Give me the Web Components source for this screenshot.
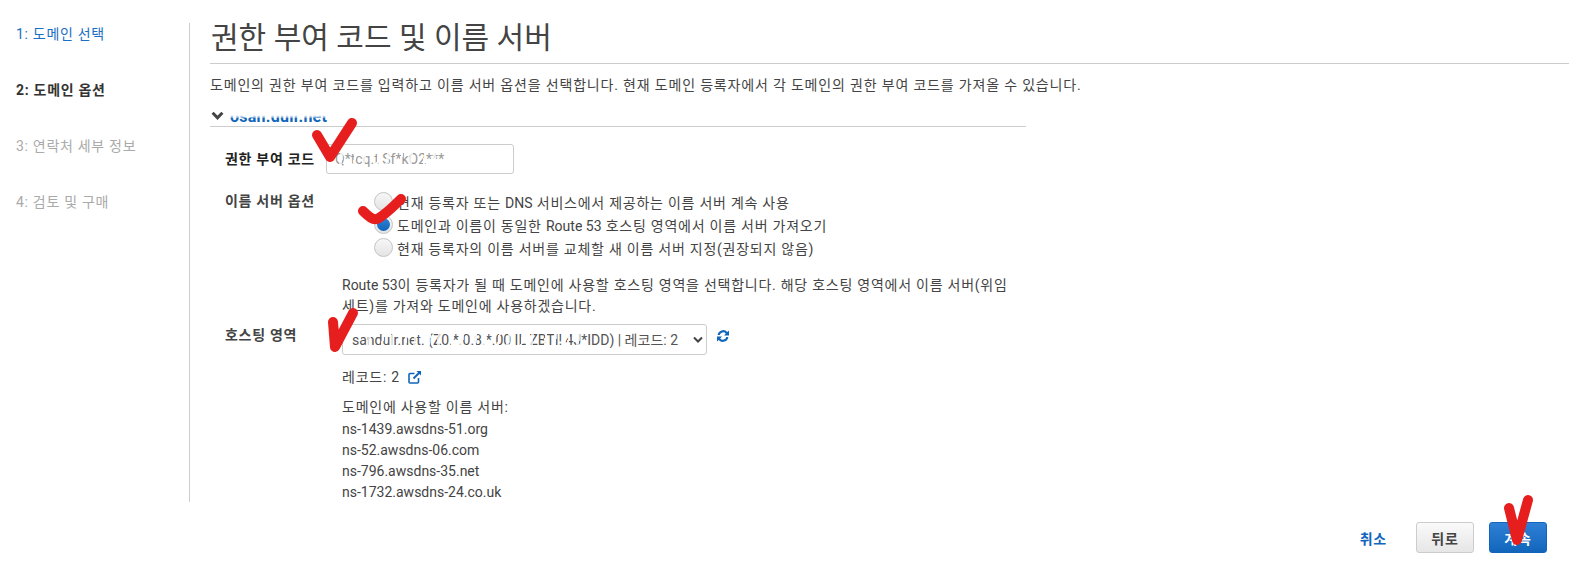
<!DOCTYPE html>
<html lang="ko">
<head>
<meta charset="utf-8">
<title>권한 부여 코드 및 이름 서버</title>
<style>
    html, body { margin: 0; height: 568px; overflow: hidden; background: #fff; }
    body {
        font-family: Roboto, "Noto Sans CJK KR", sans-serif;
        font-size: 14px;
        color: #444;
        letter-spacing: .75px;
    }
    /* hangul runs get the extra tracking, latin ones do not */
    .en { letter-spacing: 0; }
</style>
</head>
<body>
<domain-wizard>
    <wizard-nav slot="nav">
        <wizard-step state="done">1: 도메인 선택</wizard-step>
        <wizard-step state="current">2: 도메인 옵션</wizard-step>
        <wizard-step>3: 연락처 세부 정보</wizard-step>
        <wizard-step>4: 검토 및 구매</wizard-step>
    </wizard-nav>

    <page-heading title="권한 부여 코드 및 이름 서버">도메인의 권한 부여 코드를 입력하고 이름 서버 옵션을 선택합니다. 현재 도메인 등록자에서 각 도메인의 권한 부여 코드를 가져올 수 있습니다.</page-heading>

    <domain-section name="osan.dulr.net">
        <form-row label="권한 부여 코드" strong>
            <text-field value="Q*tcq.t Sf*kO2***"></text-field>
        </form-row>
        <form-row label="이름 서버 옵션" class="ns-row">
            <radio-group>
                <radio-option>현재 등록자 또는 <span class="en">DNS</span> 서비스에서 제공하는 이름 서버 계속 사용</radio-option>
                <radio-option checked>도메인과 이름이 동일한 <span class="en">Route 53</span> 호스팅 영역에서 이름 서버 가져오기</radio-option>
                <radio-option>현재 등록자의 이름 서버를 교체할 새 이름 서버 지정(권장되지 않음)</radio-option>
            </radio-group>
            <field-note><span class="en">Route 53</span>이 등록자가 될 때 도메인에 사용할 호스팅 영역을 선택합니다. 해당 호스팅 영역에서 이름 서버(위임<br>세트)를 가져와 도메인에 사용하겠습니다.</field-note>
        </form-row>
        <form-row label="호스팅 영역" class="zone-row">
            <zone-picker value="sandulr.net. (Z0.*.0.8.*.00 IL ZBTI! 4J*IDD) | 레코드: 2"></zone-picker>
            <record-info>
                <span slot="count">레코드: 2</span>
                도메인에 사용할 이름 서버:
                <div class="en">ns-1439.awsdns-51.org</div>
                <div class="en">ns-52.awsdns-06.com</div>
                <div class="en">ns-796.awsdns-35.net</div>
                <div class="en">ns-1732.awsdns-24.co.uk</div>
            </record-info>
        </form-row>
    </domain-section>

    <wizard-footer slot="footer"></wizard-footer>

    <hand-check slot="marks" style="left:306px;top:111px" d="M11 24 L24 46 L46 12"></hand-check>
    <hand-check slot="marks" style="left:349px;top:185px" d="M14 26 C20 32 24 35 28 34 C36 30 46 20 52 14"></hand-check>
    <hand-check slot="marks" style="left:320px;top:300px" d="M13 22 L15 47 L33 13"></hand-check>
    <hand-check slot="marks" style="left:1496px;top:488px" d="M13 20 L21 52 L32 12"></hand-check>
</domain-wizard>

<script>
const FONT = 'Roboto, "Noto Sans CJK KR", sans-serif';
// white streaks that hide part of the values, as in the edited screenshot
const STREAKS = 'repeating-linear-gradient(98deg, rgba(255,255,255,.9) 0 2px, rgba(255,255,255,0) 2px 9px, rgba(255,255,255,.75) 9px 12px, rgba(255,255,255,0) 12px 23px)';

class DomainWizard extends HTMLElement {
    connectedCallback() {
        this.attachShadow({ mode: 'open' });
        this.shadowRoot.innerHTML = `
            <style>
                :host { display: block; position: relative; width: 1589px; height: 568px; overflow: hidden; }
                .top { display: flex; padding-top: 23px; height: 480px; }
                .side { width: 190px; height: 479px; border-right: 1px solid #ccc; box-sizing: border-box; flex: none; }
                .main { flex: 1; padding: 0 20px; min-width: 0; }
            </style>
            <div class="top">
                <div class="side"><slot name="nav"></slot></div>
                <div class="main"><slot></slot></div>
            </div>
            <slot name="footer"></slot>
            <slot name="marks"></slot>
        `;
    }
}

class WizardNav extends HTMLElement {
    connectedCallback() {
        this.attachShadow({ mode: 'open' });
        this.shadowRoot.innerHTML = `
            <style>
                :host { display: flex; flex-direction: column; gap: 36px; padding: 1px 0 0 16px; }
            </style>
            <slot></slot>
        `;
    }
}

class WizardStep extends HTMLElement {
    connectedCallback() {
        this.attachShadow({ mode: 'open' });
        this.shadowRoot.innerHTML = `
            <style>
                :host { display: block; height: 20px; line-height: 20px; font-size: 14px; color: #aaa; letter-spacing: .7px; }
                :host([state="done"]) { color: #1a6fc4; }
                :host([state="current"]) { color: #333; font-weight: 700; }
            </style>
            <slot></slot>
        `;
    }
}

class PageHeading extends HTMLElement {
    connectedCallback() {
        this.attachShadow({ mode: 'open' });
        this.shadowRoot.innerHTML = `
            <style>
                :host { display: block; }
                h1 {
                    margin: 0; height: 40px; line-height: 30px; font-size: 30px; font-weight: 400;
                    color: #444; border-bottom: 1px solid #ccc; padding-left: 1px; letter-spacing: 0;
                }
                p { margin: 11px 0 0; line-height: 20px; font-size: 14px; color: #444; letter-spacing: .82px; }
            </style>
            <h1>${this.getAttribute('title')}</h1>
            <p><slot></slot></p>
        `;
    }
}

class DomainSection extends HTMLElement {
    connectedCallback() {
        this.attachShadow({ mode: 'open' });
        this.shadowRoot.innerHTML = `
            <style>
                :host { display: block; width: 816px; margin-top: 11px; }
                .head {
                    display: flex; align-items: center; gap: 6px; height: 20px; padding-left: 1px;
                    border-bottom: 1px solid #ccc; font-weight: 700; font-size: 16px; color: #1166bb; letter-spacing: .25px;
                }
                svg { width: 13px; height: 10px; flex: none; }
                .name { position: relative; }
                .name::after {
                    content: ""; position: absolute; left: -1px; right: -1px; top: 0; height: 11px;
                    background: linear-gradient(#fff 75%, rgba(255,255,255,.3));
                }
            </style>
            <div class="head">
                <svg viewBox="0 0 13 10"><path d="M1.6 1.8 L6.5 6.8 L11.4 1.8" fill="none" stroke="#444" stroke-width="3"/></svg>
                <span class="name">${this.getAttribute('name')}</span>
            </div>
            <slot></slot>
        `;
    }
}

class FormRow extends HTMLElement {
    connectedCallback() {
        this.attachShadow({ mode: 'open' });
        this.shadowRoot.innerHTML = `
            <style>
                :host { display: grid; grid-template-columns: 101px 1fr; padding-left: 15px; margin-top: 17px; }
                :host(.ns-row) { margin-top: 16px; }
                :host(.zone-row) { margin-top: 8px; }
                .label { font-weight: 700; color: #444; line-height: 20px; padding-top: 1px; letter-spacing: .7px; white-space: nowrap; }
                :host([strong]) .label { color: #222; padding-top: 5px; }
                .field { min-width: 0; }
            </style>
            <div class="label">${this.getAttribute('label')}</div>
            <div class="field"><slot></slot></div>
        `;
    }
}

class TextField extends HTMLElement {
    connectedCallback() {
        this.attachShadow({ mode: 'open' });
        this.shadowRoot.innerHTML = `
            <style>
                :host { display: block; position: relative; width: 188px; }
                input {
                    display: block; width: 188px; height: 30px; box-sizing: border-box; padding: 0 8px;
                    border: 1px solid #ccc; border-radius: 3px; font: 14px ${FONT}; color: #999; background: #fff;
                }
                .streaks { position: absolute; left: 6px; right: 2px; top: 4px; bottom: 4px; background: ${STREAKS}; }
            </style>
            <input type="text" value="${this.getAttribute('value')}">
            <div class="streaks"></div>
        `;
    }
}

class RadioGroup extends HTMLElement {
    connectedCallback() {
        this.attachShadow({ mode: 'open' });
        this.shadowRoot.innerHTML = `
            <style>
                :host { display: block; padding-left: 48px; }
            </style>
            <slot></slot>
        `;
    }
}

class RadioOption extends HTMLElement {
    connectedCallback() {
        this.attachShadow({ mode: 'open' });
        this.shadowRoot.innerHTML = `
            <style>
                :host { display: flex; align-items: center; gap: 4px; height: 23px; color: #444; white-space: nowrap; }
                .dot {
                    width: 19px; height: 19px; box-sizing: border-box; border-radius: 50%; flex: none;
                    border: 1px solid #c4c4c4; background: linear-gradient(#f7f7f7, #e4e4e4);
                    display: flex; align-items: center; justify-content: center;
                }
                :host([checked]) .dot::after {
                    content: ""; width: 13px; height: 13px; border-radius: 50%;
                    background: linear-gradient(#2f80d6, #1166bb);
                }
            </style>
            <span class="dot"></span>
            <span><slot></slot></span>
        `;
    }
}

class FieldNote extends HTMLElement {
    connectedCallback() {
        this.attachShadow({ mode: 'open' });
        this.shadowRoot.innerHTML = `
            <style>
                :host { display: block; width: 720px; box-sizing: border-box; padding-left: 16px; margin-top: 16px; line-height: 20.5px; color: #444; }
            </style>
            <slot></slot>
        `;
    }
}

class ZonePicker extends HTMLElement {
    connectedCallback() {
        this.attachShadow({ mode: 'open' });
        this.shadowRoot.innerHTML = `
            <style>
                :host { display: flex; align-items: center; gap: 9px; padding-left: 16px; }
                .select { position: relative; width: 365px; height: 31px; }
                select {
                    appearance: none; display: block; width: 100%; height: 100%; box-sizing: border-box;
                    padding: 0 20px 0 9px; border: 1px solid #ccc; border-radius: 3px;
                    font: 14px ${FONT}; color: #555; background: #fff;
                }
                .arrow { position: absolute; right: 4px; top: 12px; width: 10px; height: 8px; pointer-events: none; }
                .streaks { position: absolute; left: 18px; width: 220px; top: 5px; bottom: 5px; background: ${STREAKS}; pointer-events: none; }
                .refresh { width: 14px; height: 14px; margin-top: -8px; flex: none; }
            </style>
            <div class="select">
                <select><option>${this.getAttribute('value')}</option></select>
                <div class="streaks"></div>
                <svg class="arrow" viewBox="0 0 10 8"><path d="M1 1.5 L5 5.5 L9 1.5" fill="none" stroke="#444" stroke-width="2"/></svg>
            </div>
            <svg class="refresh" viewBox="0 0 14 14" fill="#1166bb">
                <path d="M1.6 6 A5.6 5.6 0 0 1 11.3 3 L13 1.4 V6.4 H8 L9.8 4.6 A3.5 3.5 0 0 0 3.7 6 Z"/>
                <path d="M12.4 8 A5.6 5.6 0 0 1 2.7 11 L1 12.6 V7.6 H6 L4.2 9.4 A3.5 3.5 0 0 0 10.3 8 Z"/>
            </svg>
        `;
    }
}

class RecordInfo extends HTMLElement {
    connectedCallback() {
        this.attachShadow({ mode: 'open' });
        this.shadowRoot.innerHTML = `
            <style>
                :host { display: block; padding-left: 16px; margin-top: 12px; line-height: 21.3px; color: #444; }
                .count { display: flex; align-items: center; gap: 8px; margin-bottom: 9px; }
                svg { width: 14px; height: 14px; margin-top: -2px; }
            </style>
            <div class="count">
                <slot name="count"></slot>
                <svg viewBox="0 0 14 14" fill="none" stroke="#1166bb">
                    <path d="M10.5 8 V12 A1 1 0 0 1 9.5 13 H2 A1 1 0 0 1 1 12 V4.5 A1 1 0 0 1 2 3.5 H6.5" stroke-width="1.6"/>
                    <path d="M5.5 8.5 L12 2" stroke-width="2"/>
                    <path d="M8.5 1 H13 V5.5 Z" fill="#1166bb" stroke="none"/>
                </svg>
            </div>
            <slot></slot>
        `;
    }
}

class WizardFooter extends HTMLElement {
    connectedCallback() {
        this.attachShadow({ mode: 'open' });
        this.shadowRoot.innerHTML = `
            <style>
                :host { display: flex; align-items: center; justify-content: flex-end; gap: 15px; padding: 19px 42px 0 0; }
                a { color: #1166bb; font-weight: 700; text-decoration: none; margin-right: 14px; }
                button {
                    width: 58px; height: 31px; box-sizing: border-box; border-radius: 3px;
                    font: 700 14px ${FONT}; padding: 0; letter-spacing: .75px;
                }
                .back { border: 1px solid #ccc; color: #444; background: linear-gradient(#fafafa, #e6e6e6); }
                .next { border: 1px solid #1166bb; color: #fff; background: linear-gradient(#2f80d6, #1166bb); }
            </style>
            <a href="#">취소</a>
            <button class="back">뒤로</button>
            <button class="next">계속</button>
        `;
    }
}

// red marks somebody drew on top of the screenshot
class HandCheck extends HTMLElement {
    connectedCallback() {
        this.attachShadow({ mode: 'open' });
        this.shadowRoot.innerHTML = `
            <style>
                :host { position: absolute; display: block; width: 60px; height: 60px; pointer-events: none; }
                svg { display: block; width: 60px; height: 60px; }
            </style>
            <svg viewBox="0 0 60 60"><path d="${this.getAttribute('d')}" fill="none" stroke="#e61e1e" stroke-width="10" stroke-linecap="round" stroke-linejoin="round"/></svg>
        `;
    }
}

customElements.define('domain-wizard', DomainWizard);
customElements.define('wizard-nav', WizardNav);
customElements.define('wizard-step', WizardStep);
customElements.define('page-heading', PageHeading);
customElements.define('domain-section', DomainSection);
customElements.define('form-row', FormRow);
customElements.define('text-field', TextField);
customElements.define('radio-group', RadioGroup);
customElements.define('radio-option', RadioOption);
customElements.define('field-note', FieldNote);
customElements.define('zone-picker', ZonePicker);
customElements.define('record-info', RecordInfo);
customElements.define('wizard-footer', WizardFooter);
customElements.define('hand-check', HandCheck);
</script>
</body>
</html>
